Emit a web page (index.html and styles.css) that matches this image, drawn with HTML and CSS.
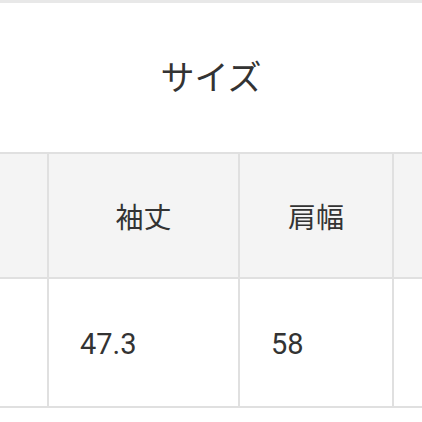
FILE: index.html
```html
<!DOCTYPE html>
<html lang="ja">
<head>
<meta charset="utf-8">
<link rel="stylesheet" href="styles.css">
</head>
<body>
<div class="topbar"></div>
<h1 class="title">サイズ</h1>
<div class="table-wrap">
  <table class="size-table">
    <colgroup>
      <col class="c-first">
      <col class="c-wide">
      <col class="c-mid">
      <col class="c-mid">
    </colgroup>
    <thead>
      <tr>
        <th>着丈</th>
        <th>袖丈</th>
        <th>肩幅</th>
        <th>身幅</th>
      </tr>
    </thead>
    <tbody>
      <tr>
        <td>70</td>
        <td>47.3</td>
        <td>58</td>
        <td>60</td>
      </tr>
    </tbody>
  </table>
</div>
</body>
</html>
```

FILE: styles.css
```css
html, body {
  margin: 0;
  padding: 0;
  background: #ffffff;
  width: 422px;
  height: 422px;
  overflow: hidden;
}

.topbar {
  height: 3px;
  background: #e8e8e8;
}

.title {
  margin: 0;
  height: 149px;
  display: flex;
  align-items: center;
  justify-content: center;
  padding-bottom: 4px;
  box-sizing: border-box;
  font-family: "Noto Sans CJK JP", sans-serif;
  font-weight: 400;
  font-size: 34px;
  color: #333333;
}

.table-wrap {
  overflow: hidden;
  width: 422px;
}

.size-table {
  border-collapse: collapse;
  table-layout: fixed;
  width: 651px;
  margin-left: -105px;
}

.c-first { width: 152px; }
.c-wide { width: 191px; }
.c-mid { width: 154px; }

.size-table th,
.size-table td {
  border: 2px solid #e0e0e0;
  padding: 0;
  color: #333333;
}

.size-table th {
  height: 123px;
  background: #f4f4f4;
  font-family: "Noto Sans CJK JP", sans-serif;
  font-weight: 400;
  font-size: 28px;
  text-align: center;
}

.size-table td {
  height: 124px;
  background: #ffffff;
  font-family: Roboto, "Liberation Sans", sans-serif;
  font-size: 29px;
  text-align: left;
  padding-left: 31px;
  padding-top: 3px;
}
```
